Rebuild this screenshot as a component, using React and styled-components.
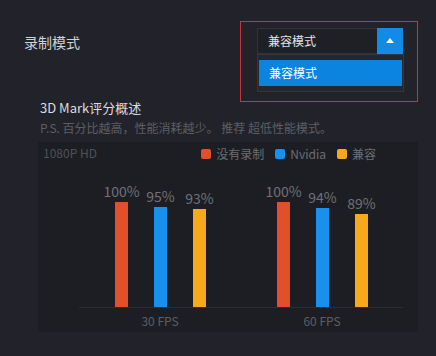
import React from "react";
import styled, { createGlobalStyle } from "styled-components";

const Global = createGlobalStyle`
  html, body { margin: 0; padding: 0; background: #22232a; }
  body { font-family: "Noto Sans CJK SC", "Noto Sans", sans-serif; }
  * { box-sizing: border-box; }
`;

const Page = styled.div`
  width: 436px;
  height: 356px;
  background: #22232a;
  padding-top: 21px;
  overflow: hidden;
`;

const Row = styled.div`
  display: flex;
  justify-content: space-between;
  align-items: flex-start;
  padding: 0 18px 0 24px;
`;

const Label = styled.div`
  margin-top: 11px;
  font-size: 14px;
  line-height: 20px;
  color: #d2d3d6;
`;

const Highlight = styled.div`
  border: 1px solid #c9333b;
  padding: 6px 13px 9px 16px;
`;

const Select = styled.div`
  display: flex;
  width: 146px;
  height: 26px;
`;

const SelectField = styled.div`
  flex: 1;
  height: 26px;
  border: 1px solid #31333a;
  border-right: none;
  background: #1f2026;
  color: #e4e4e6;
  font-size: 12px;
  line-height: 24px;
  padding-left: 10px;
`;

const ArrowButton = styled.div`
  width: 26px;
  height: 26px;
  background: #118be6;
  display: flex;
  align-items: center;
  justify-content: center;
`;

const Caret = styled.div`
  width: 0;
  height: 0;
  border-left: 4px solid transparent;
  border-right: 4px solid transparent;
  border-bottom: 5px solid #ffffff;
  margin-top: -1px;
`;

const List = styled.div`
  width: 147px;
  border: 1px solid #34363d;
  background: #25272e;
  padding: 5px 1px;
`;

const ListItem = styled.div`
  height: 26px;
  background: #0b84e0;
  color: #ffffff;
  font-size: 12px;
  line-height: 26px;
  padding-left: 10px;
`;

const Section = styled.div`
  padding-left: 38px;
`;

const Title = styled.div`
  margin-top: -1px;
  padding-left: 2px;
  font-size: 13px;
  line-height: 14px;
  color: #dcdde0;
`;

const Sub = styled.div`
  margin-top: 6px;
  padding-left: 2px;
  font-size: 12px;
  line-height: 14px;
  color: #5c5e65;
  white-space: nowrap;
`;

const Panel = styled.div`
  margin-top: 7px;
  width: 380px;
  height: 190px;
  background: #1d1e23;
`;

const Header = styled.div`
  height: 22px;
  display: flex;
  align-items: center;
  justify-content: space-between;
  padding: 0 42px 0 5px;
`;

const Resolution = styled.div`
  font-size: 12px;
  line-height: 14px;
  color: #4f5158;
`;

const Legend = styled.div`
  display: flex;
  align-items: center;
  gap: 11px;
  padding-top: 2px;
`;

const LegendItem = styled.div`
  display: flex;
  align-items: center;
  gap: 5px;
  font-size: 12px;
  line-height: 14px;
  color: #6c6e75;
`;

const Swatch = styled.span`
  width: 10px;
  height: 10px;
  border-radius: 2px;
  background: ${(p) => p.$color};
`;

const Plot = styled.div`
  margin-left: 41px;
  width: 324px;
  height: 144px;
  border-bottom: 1px solid #2b2d33;
  display: flex;
`;

const Group = styled.div`
  flex: 1;
  display: flex;
  justify-content: center;
  align-items: flex-end;
  gap: 26px;
  padding-left: 1px;
`;

const BarCol = styled.div`
  width: 13px;
  display: flex;
  flex-direction: column;
  align-items: center;
`;

const Value = styled.div`
  font-size: 14px;
  line-height: 14px;
  margin-bottom: 4px;
  color: #6f7178;
  white-space: nowrap;
`;

const Bar = styled.div`
  width: 13px;
  background: ${(p) => p.$color};
`;

const Axis = styled.div`
  margin-left: 41px;
  width: 324px;
  display: flex;
  padding-top: 2px;
`;

const AxisLabel = styled.div`
  flex: 1;
  text-align: center;
  font-size: 12px;
  line-height: 22px;
  color: #5c5e65;
`;

const series = [
  { name: "没有录制", color: "#e2502a" },
  { name: "Nvidia", color: "#1890ee" },
  { name: "兼容", color: "#f6a91b" },
];

const groups = [
  { label: "30 FPS", values: [100, 95, 93] },
  { label: "60 FPS", values: [100, 94, 89] },
];

export default function App() {
  return (
    <Page>
      <Global />
      <Row>
        <Label>录制模式</Label>
        <Highlight>
          <Select>
            <SelectField>兼容模式</SelectField>
            <ArrowButton>
              <Caret />
            </ArrowButton>
          </Select>
          <List>
            <ListItem>兼容模式</ListItem>
          </List>
        </Highlight>
      </Row>
      <Section>
        <Title>3D Mark评分概述</Title>
        <Sub>P.S. 百分比越高，性能消耗越少。 推荐 超低性能模式。</Sub>
        <Panel>
          <Header>
            <Resolution>1080P HD</Resolution>
            <Legend>
              {series.map((s) => (
                <LegendItem key={s.name}>
                  <Swatch $color={s.color} />
                  {s.name}
                </LegendItem>
              ))}
            </Legend>
          </Header>
          <Plot>
            {groups.map((g) => (
              <Group key={g.label}>
                {g.values.map((v, i) => (
                  <BarCol key={i}>
                    <Value>{v}%</Value>
                    <Bar $color={series[i].color} style={{ height: `${(105 * v) / 100}px` }} />
                  </BarCol>
                ))}
              </Group>
            ))}
          </Plot>
          <Axis>
            {groups.map((g) => (
              <AxisLabel key={g.label}>{g.label}</AxisLabel>
            ))}
          </Axis>
        </Panel>
      </Section>
    </Page>
  );
}
